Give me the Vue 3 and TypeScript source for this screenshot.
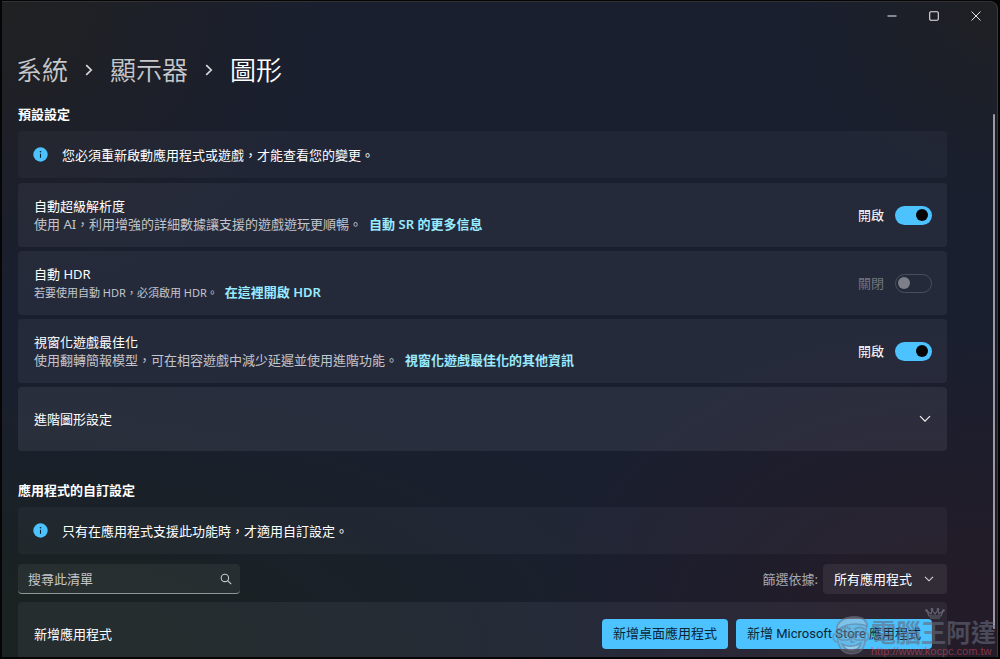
<script setup lang="ts">
import { reactive, ref } from 'vue'

interface Setting {
  id: string
  title: string
  description: string
  link: string
  small: boolean
  enabled: boolean
  disabled: boolean
}

const settings = reactive<Setting[]>([
  {
    id: 'auto-sr',
    title: '自動超級解析度',
    description: '使用 AI，利用增強的詳細數據讓支援的遊戲遊玩更順暢。',
    link: '自動 SR 的更多信息',
    small: false,
    enabled: true,
    disabled: false,
  },
  {
    id: 'auto-hdr',
    title: '自動 HDR',
    description: '若要使用自動 HDR，必須啟用 HDR。',
    link: '在這裡開啟 HDR',
    small: true,
    enabled: false,
    disabled: true,
  },
  {
    id: 'windowed',
    title: '視窗化遊戲最佳化',
    description: '使用翻轉簡報模型，可在相容遊戲中減少延遲並使用進階功能。',
    link: '視窗化遊戲最佳化的其他資訊',
    small: false,
    enabled: true,
    disabled: false,
  },
])

const query = ref('')
const filter = ref('all')
</script>

<template>
  <div class="desktop">
    <div class="window">
      <header class="titlebar">
        <button type="button" class="caption" aria-label="最小化">
          <svg width="10" height="10" viewBox="0 0 10 10"><path d="M0.5 5h9" stroke="#a9abb0" stroke-width="1.6" /></svg>
        </button>
        <button type="button" class="caption" aria-label="最大化">
          <svg width="10" height="10" viewBox="0 0 10 10"><rect x="0.7" y="0.7" width="8.6" height="8.6" rx="1.2" fill="none" stroke="#e6e6e6" stroke-width="1.1" /></svg>
        </button>
        <button type="button" class="caption" aria-label="關閉">
          <svg width="10" height="10" viewBox="0 0 10 10"><path d="M0.5 0.5l9 9M9.5 0.5l-9 9" stroke="#e6e6e6" stroke-width="1" /></svg>
        </button>
      </header>

      <main class="content">
        <nav class="crumbs">
          <a href="#system">系統</a>
          <svg width="8" height="12" viewBox="0 0 8 12"><path d="M1.2 1.2L6.2 6l-5 4.8" fill="none" stroke="#d6d7da" stroke-width="1.7" /></svg>
          <a href="#display">顯示器</a>
          <svg width="8" height="12" viewBox="0 0 8 12"><path d="M1.2 1.2L6.2 6l-5 4.8" fill="none" stroke="#d6d7da" stroke-width="1.7" /></svg>
          <h1>圖形</h1>
        </nav>

        <h2>預設設定</h2>
        <div class="stack">
          <div class="card info">
            <svg width="15" height="15" viewBox="0 0 15 15"><circle cx="7.5" cy="7.5" r="7.2" fill="#4cc2ff" /><circle cx="7.5" cy="4.8" r="0.8" fill="#10202c" /><path d="M7.5 6.8v4" stroke="#10202c" stroke-width="1.1" /></svg>
            <span>您必須重新啟動應用程式或遊戲，才能查看您的變更。</span>
          </div>

          <div v-for="item in settings" :key="item.id" class="card setting">
            <div class="text">
              <label :for="item.id">{{ item.title }}</label>
              <p>
                <span :class="{ small: item.small }">{{ item.description }}</span>
                <a :href="'#' + item.id">{{ item.link }}</a>
              </p>
            </div>
            <span class="state" :class="{ dim: item.disabled }">{{ item.enabled ? '開啟' : '關閉' }}</span>
            <input :id="item.id" v-model="item.enabled" type="checkbox" role="switch" class="toggle" :disabled="item.disabled" />
          </div>

          <button type="button" class="card expander">
            <span>進階圖形設定</span>
            <svg width="12" height="8" viewBox="0 0 12 8"><path d="M1 1.2l5 5 5-5" fill="none" stroke="#f2f2f2" stroke-width="1.2" /></svg>
          </button>
        </div>

        <h2 class="second">應用程式的自訂設定</h2>
        <div class="card info">
          <svg width="15" height="15" viewBox="0 0 15 15"><circle cx="7.5" cy="7.5" r="7.2" fill="#4cc2ff" /><circle cx="7.5" cy="4.8" r="0.8" fill="#10202c" /><path d="M7.5 6.8v4" stroke="#10202c" stroke-width="1.1" /></svg>
          <span>只有在應用程式支援此功能時，才適用自訂設定。</span>
        </div>

        <div class="tools">
          <div class="search">
            <input v-model="query" type="text" placeholder="搜尋此清單" aria-label="搜尋此清單" />
            <svg width="12" height="12" viewBox="0 0 12 12"><circle cx="4.9" cy="4.9" r="3.7" fill="none" stroke="#c5c8ca" stroke-width="1.1" /><path d="M7.6 7.6l3.6 3.6" stroke="#c5c8ca" stroke-width="1.2" /></svg>
          </div>
          <label for="filter">篩選依據:</label>
          <div class="picker">
            <select id="filter" v-model="filter">
              <option value="all">所有應用程式</option>
            </select>
            <svg width="10" height="6" viewBox="0 0 10 6"><path d="M1 0.8l4 4 4-4" fill="none" stroke="#d6d7da" stroke-width="1.1" /></svg>
          </div>
        </div>

        <div class="card add">
          <span>新增應用程式</span>
          <button type="button">新增桌面應用程式</button>
          <button type="button">新增 Microsoft Store 應用程式</button>
        </div>
      </main>

      <div class="scrollbar"></div>
    </div>

    <div class="mark">
      <svg width="40" height="42" viewBox="0 0 40 42" fill="none" stroke="#767b8b" stroke-width="1.6" stroke-linecap="round">
        <path d="M6 15C6 6 14 2 24 2c8 0 12 4 12 9l-2 7c1 9-1 16-6 19-6 3-14 2-18-3-3-4-4-11-4-19z" fill="#a9adb8" fill-opacity=".45" />
        <path d="M6 15C5 8 12 2 24 2c8 0 12 4 12 9-9-3-20-3-30 4z" fill="#c9ccd4" fill-opacity=".5" />
        <path d="M5 19c-4-1-4 7 1 8M35 18c4 0 3 7-1 8" />
        <path d="M9 15c3-3 7-3 10-1M24 14c3-2 6-2 9 0" stroke-width="2.2" />
        <rect x="8" y="17" width="11" height="8" rx="3" />
        <rect x="23" y="17" width="11" height="8" rx="3" />
        <path d="M19 20h4M11 21c2-2 4-2 6 0M25 21c2-2 4-2 6 0M21 21l-1 6h3" />
        <path d="M11 29c6 3 13 3 19-1-2 9-15 10-19 1z" fill="#e5e6ea" fill-opacity=".7" />
      </svg>
      <div class="words">
        <svg class="crown" width="20" height="11" viewBox="0 0 20 11" fill="none" stroke="#8b8f9c" stroke-width="1.1">
          <path d="M4 8L2 3l4 3 1-4 3 4 3-4 1 4 4-3-2 5zM5 10h10" />
          <circle cx="1.5" cy="2.5" r="0.8" />
          <circle cx="7" cy="1.3" r="0.8" />
          <circle cx="13" cy="1.3" r="0.8" />
          <circle cx="18.5" cy="2.5" r="0.8" />
        </svg>
        <strong>電腦王阿達</strong>
        <small>http://www.kocpc.com.tw</small>
      </div>
    </div>
  </div>
</template>

<style>
html,
body {
  margin: 0;
  background: #000;
}
</style>

<style scoped>
* {
  box-sizing: border-box;
}

.desktop {
  position: relative;
  height: 100vh;
  padding: 1px 2px 2px;
  overflow: hidden;
  background: #050506;
  color: #fff;
  font-family: "Noto Sans", "Noto Sans CJK TC", sans-serif;
  font-size: 13px;
  line-height: 18px;
}

button,
input,
select {
  font: inherit;
  color: inherit;
}

.window {
  position: relative;
  height: 100%;
  overflow: hidden;
  border-top: 1px solid #303236;
  border-right: 1px solid #3a3b40;
  border-radius: 0 8px 0 0;
  background:
    radial-gradient(ellipse 40% 46% at 94% 96%, #231c28 20%, #231c2800 100%),
    radial-gradient(ellipse 32% 45% at 0% 0%, #202122 0%, #20212200 100%),
    radial-gradient(ellipse 70% 45% at 0% 100%, #1a2222 20%, #1a222200 100%),
    radial-gradient(ellipse 20% 30% at 100% 0%, #1e2023 0%, #1e202300 100%),
    #1a1f2f;
}

.titlebar {
  display: flex;
  justify-content: flex-end;
  height: 27px;
}

.caption {
  display: flex;
  align-items: center;
  justify-content: center;
  width: 42px;
  padding: 0;
  border: 0;
  background: transparent;
}

.content {
  padding: 0 50px 0 16px;
}

.crumbs {
  display: flex;
  align-items: center;
  gap: 17px;
  height: 36px;
  margin-top: 23px;
  margin-left: -2px;
  font-size: 26px;
  line-height: 36px;
  font-weight: 350;
}

.crumbs a {
  color: #c6c8cc;
  text-decoration: none;
}

.crumbs h1 {
  margin: 0;
  font-size: 26px;
  font-weight: 350;
}

h2 {
  margin: 17px 0 8px;
  font-size: 13px;
  font-weight: 600;
}

h2.second {
  margin-top: 30px;
}

.stack {
  display: flex;
  flex-direction: column;
  gap: 4px;
}

.card {
  display: flex;
  align-items: center;
  border: 0;
  border-radius: 4px;
  background: rgba(225, 225, 255, 0.06);
}

.info {
  gap: 14px;
  min-height: 47px;
  padding: 0 15px;
  background: rgba(225, 235, 255, 0.04);
}

.stack .info {
  margin-bottom: 1px;
}

.setting {
  min-height: 64px;
  padding: 0 15px 0 16px;
}

.text {
  flex: 1;
}

.text p {
  display: flex;
  align-items: baseline;
  gap: 7px;
  margin: 0;
  color: #c3c5cb;
}

.text .small {
  font-size: 11px;
}

.text a {
  color: #99ebff;
  font-weight: 600;
  text-decoration: none;
}

.state {
  margin-right: 11px;
}

.dim {
  color: #71747f;
}

.toggle {
  appearance: none;
  display: flex;
  align-items: center;
  width: 37px;
  height: 19px;
  margin: 0;
  padding: 0 4px;
  border: 0;
  border-radius: 10px;
  background: #4cc2ff;
}

.toggle::before {
  content: "";
  width: 12px;
  height: 12px;
  margin-left: auto;
  border-radius: 50%;
  background: #050506;
}

.toggle:disabled {
  padding: 0 2px;
  border: 1px solid #4b4e5a;
  background: transparent;
}

.toggle:disabled::before {
  margin-left: 0;
  background: #7c7e89;
}

.expander {
  justify-content: space-between;
  min-height: 64px;
  padding: 0 16px;
  background: rgba(235, 235, 255, 0.08);
  text-align: left;
}

.tools {
  display: flex;
  align-items: center;
  height: 30px;
  margin: 10px 0 8px;
}

.search {
  display: flex;
  align-items: center;
  width: 222px;
  height: 30px;
  margin-right: auto;
  padding: 0 8px 0 10px;
  border-bottom: 1px solid #8f9495;
  border-radius: 4px;
  background: rgba(255, 255, 255, 0.06);
}

.search input {
  flex: 1;
  min-width: 0;
  padding: 0;
  border: 0;
  outline: 0;
  background: transparent;
}

.search input::placeholder {
  color: #c3c6c8;
  opacity: 1;
}

.tools label {
  margin-right: 5px;
  color: #a9a9b0;
}

.picker {
  display: grid;
  align-items: center;
  width: 124px;
  border-radius: 4px;
  background: rgba(255, 255, 255, 0.07);
}

.picker select,
.picker svg {
  grid-area: 1 / 1;
}

.picker select {
  appearance: none;
  height: 30px;
  padding: 0 11px;
  border: 0;
  background: transparent;
}

.picker svg {
  justify-self: end;
  margin-right: 13px;
  pointer-events: none;
}

.add {
  gap: 8px;
  min-height: 64px;
  padding: 0 15px 0 16px;
}

.add span {
  margin-right: auto;
}

.add button {
  height: 30px;
  padding: 0 11px;
  border: 0;
  border-radius: 4px;
  background: #4cc2ff;
  color: #0b2636;
  font-family: Roboto, "Noto Sans CJK TC", sans-serif;
}

.scrollbar {
  position: absolute;
  top: 112px;
  right: 2px;
  bottom: 28px;
  width: 2px;
  border-radius: 1px;
  background: #9b9ba1;
}

.mark {
  position: absolute;
  right: 4px;
  bottom: 2px;
  display: flex;
  align-items: flex-end;
  opacity: 0.6;
  pointer-events: none;
}

.words {
  display: flex;
  flex-direction: column;
}

.crown {
  margin-left: 54px;
}

.words strong {
  color: #646a7c;
  font-size: 25px;
  line-height: 26px;
}

.words small {
  color: #c2455a;
  font-family: "Liberation Sans", Arial, sans-serif;
  font-size: 11px;
  line-height: 12px;
}
</style>
